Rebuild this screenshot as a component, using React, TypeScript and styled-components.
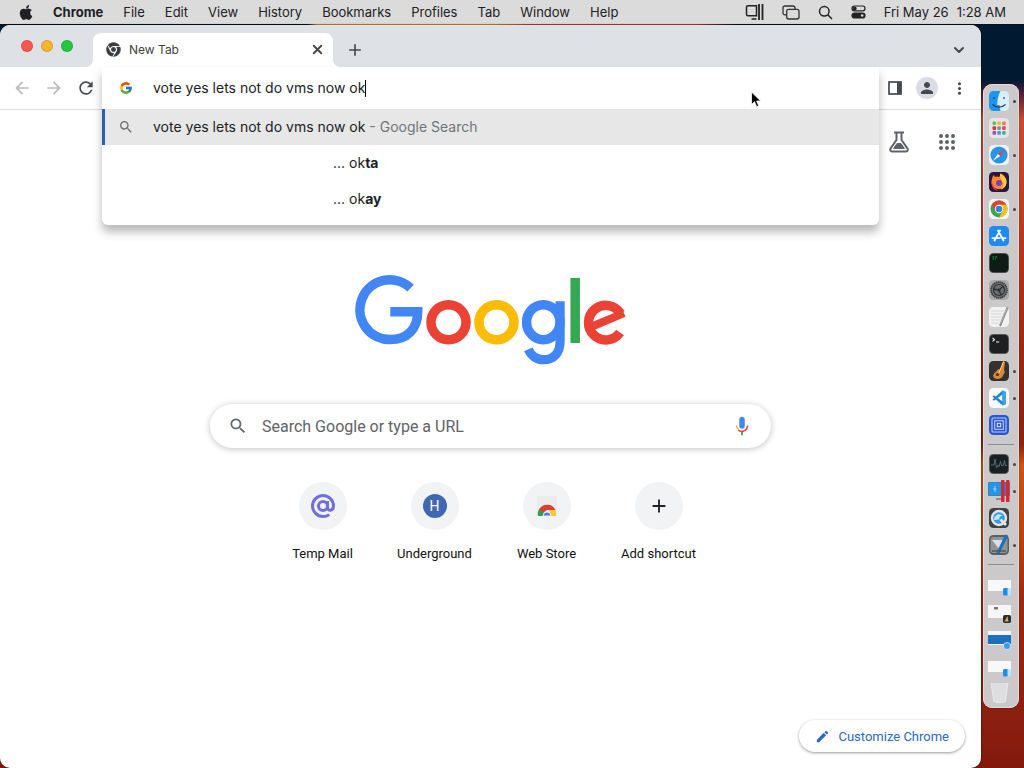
import React from "react";
import styled, { createGlobalStyle } from "styled-components";
import { FaApple, FaChrome } from "react-icons/fa";
import { FcGoogle } from "react-icons/fc";
import {
  MdAdd,
  MdArrowBack,
  MdArrowForward,
  MdEdit,
  MdMoreVert,
  MdPerson,
  MdRefresh,
  MdSearch,
} from "react-icons/md";
import { ChevronDown, X } from "lucide-react";

const GlobalStyle = createGlobalStyle`
  *, *::before, *::after { box-sizing: border-box; }
  body { margin: 0; font-family: Inter, "Liberation Sans", sans-serif; color: #202124; }
  button, input { font: inherit; color: inherit; }
  ul { list-style: none; margin: 0; padding: 0; }
`;

const Desktop = styled.div`
  min-height: 100vh;
  display: flex;
  flex-direction: column;
  overflow: hidden;
  background:
    linear-gradient(90deg, #05111f 30%, #d9982c 31%, #d9982c 48%, #c0413c 52%, #c0413c 68%, #05111f 72%) 0 0 / 100% 25px no-repeat,
    linear-gradient(180deg, #021a31 0, #021a31 80px, #4b1d35 92px, #c94a33 120px, #c4452c 170px, #b5341c 260px, #8e2412 400px, #8c2410 445px, #cf5217 465px, #b9430f 540px, #9c2a12 600px, #83190e 100%);
`;

const MenuBar = styled.header`
  height: 24px;
  display: flex;
  align-items: center;
  justify-content: space-between;
  padding: 0 18px 0 19px;
  background: #dcdbdb;
  font-size: 13px;
  line-height: 24px;
  white-space: nowrap;
`;

const MenuGroup = styled.nav<{ $gap: number }>`
  display: flex;
  align-items: center;
  gap: ${(p) => p.$gap}px;
`;

const MenuItem = styled.button<{ $strong?: boolean }>`
  border: 0;
  padding: 0;
  background: none;
  display: flex;
  align-items: center;
  font-weight: ${(p) => (p.$strong ? 700 : 400)};
`;

const AppleItem = styled(MenuItem)`
  width: 14px;
  justify-content: center;
`;

const Clock = styled.time`
  display: flex;
  gap: 8px;
`;

const Workspace = styled.div`
  flex: 1;
  display: flex;
  align-items: stretch;
  padding: 1px 5px 0 0;
  gap: 2px;
`;

const Window = styled.main`
  flex: 1;
  min-width: 0;
  display: flex;
  flex-direction: column;
  border-radius: 10px;
  background: #fff;
  overflow: hidden;
  box-shadow: 0 0 2px rgba(0, 0, 0, 0.8);
`;

const TabStrip = styled.div`
  height: 42px;
  display: flex;
  align-items: flex-end;
  padding: 0 12px 0 21px;
  background: #dee1e6;
`;

const Lights = styled.div`
  display: flex;
  gap: 8px;
  align-self: center;
  margin-right: 20px;
`;

const Light = styled.button<{ $color: string }>`
  width: 12px;
  height: 12px;
  padding: 0;
  border: 1px solid rgba(0, 0, 0, 0.12);
  border-radius: 50%;
  background: ${(p) => p.$color};
`;

const Tab = styled.div`
  position: relative;
  width: 240px;
  height: 34px;
  display: flex;
  align-items: center;
  gap: 8px;
  padding: 0 8px 1px 13px;
  border-radius: 8px 8px 0 0;
  background: #fff;
  color: #3c4043;
  font-size: 12px;
  &::before, &::after {
    content: "";
    position: absolute;
    bottom: 0;
    width: 8px;
    height: 8px;
  }
  &::before {
    left: -8px;
    background: radial-gradient(circle at 0 0, transparent 8px, #fff 8px);
  }
  &::after {
    right: -8px;
    background: radial-gradient(circle at 100% 0, transparent 8px, #fff 8px);
  }
`;

const TabTitle = styled.span`
  flex: 1;
`;

const IconButton = styled.button<{ $size: number; $color?: string }>`
  flex: none;
  width: ${(p) => p.$size}px;
  height: ${(p) => p.$size}px;
  display: flex;
  align-items: center;
  justify-content: center;
  padding: 0;
  border: 0;
  border-radius: 50%;
  background: none;
  color: ${(p) => p.$color ?? "#46494d"};
`;

const StripButtons = styled.div`
  flex: 1;
  height: 34px;
  display: flex;
  align-items: center;
  justify-content: space-between;
  padding-left: 10px;
`;

const Toolbar = styled.div`
  height: 43px;
  display: flex;
  align-items: center;
  padding: 0 6px;
  border-bottom: 1px solid #dadce0;
`;

const ToolbarGroup = styled.div`
  flex: none;
  display: flex;
  align-items: center;
`;

const OmniboxSlot = styled.div`
  position: relative;
  flex: 1;
  align-self: stretch;
`;

const Omnibox = styled.div`
  position: absolute;
  z-index: 2;
  inset: 0 0 auto 0;
  padding-bottom: 8px;
  border-radius: 0 0 6px 6px;
  background: #fff;
  box-shadow: 0 7px 10px rgba(0, 0, 0, 0.28);
  font-size: 14px;
  line-height: 20px;
`;

const OmniboxField = styled.label`
  height: 42px;
  display: flex;
  align-items: center;
  padding-left: 17px;
  gap: 20px;
`;

const Typed = styled.span`
  flex: 1;
  display: flex;
  align-items: center;
`;

const OmniInput = styled.input`
  field-sizing: content;
  padding: 0;
  border: 0;
  outline: 0;
  background: none;
  caret-color: transparent;
`;

const Caret = styled.span`
  width: 1px;
  height: 17px;
  background: #000;
`;

const Suggestion = styled.button<{ $selected?: boolean }>`
  width: 100%;
  height: 36px;
  display: flex;
  align-items: center;
  gap: 20px;
  padding: 0 0 0 14px;
  border: 0;
  border-left: 3px solid ${(p) => (p.$selected ? "#2a5ebf" : "transparent")};
  background: ${(p) => (p.$selected ? "#e7e7e7" : "#fff")};
  text-align: left;
  white-space: pre;
`;

const IconCell = styled.span`
  width: 14px;
  display: flex;
  justify-content: center;
  color: #6b6e72;
  svg { flex: none; }
`;

const TailText = styled.span`
  padding-left: 180px;
`;

const Muted = styled.span`
  color: #70757a;
`;

const Avatar = styled.span`
  width: 22px;
  height: 22px;
  display: flex;
  align-items: center;
  justify-content: center;
  border-radius: 50%;
  background: #dadce6;
`;

const Page = styled.section`
  flex: 1;
  display: flex;
  flex-direction: column;
  align-items: center;
  padding: 16px;
  font-family: Roboto, "Liberation Sans", sans-serif;
`;

const PageTools = styled.div`
  align-self: flex-end;
  display: flex;
  gap: 16px;
  padding-right: 2px;
`;

const Logo = styled.svg`
  display: block;
  margin: 117px 0 37px;
`;

const SearchBox = styled.label`
  width: 100%;
  max-width: 561px;
  height: 44px;
  display: flex;
  align-items: center;
  gap: 14px;
  padding: 0 14px 0 18px;
  border-radius: 22px;
  box-shadow: 0 1px 6px rgba(32, 33, 36, 0.28);
  color: #5f6368;
`;

const SearchInput = styled.input`
  flex: 1;
  min-width: 0;
  padding: 0;
  border: 0;
  outline: 0;
  background: none;
  font-size: 16px;
  &::placeholder { color: #5f6368; opacity: 1; }
`;

const Shortcuts = styled.ul`
  display: flex;
  margin-top: 34px;
`;

const Shortcut = styled.a`
  width: 112px;
  display: flex;
  flex-direction: column;
  align-items: center;
  gap: 16px;
  color: #111;
  font-size: 13px;
  line-height: 16px;
  text-decoration: none;
`;

const Disc = styled.span`
  width: 48px;
  height: 48px;
  display: flex;
  align-items: center;
  justify-content: center;
  border-radius: 50%;
  background: #f1f3f4;
`;

const Monogram = styled.span`
  width: 24px;
  height: 24px;
  border-radius: 50%;
  background: #4267b2;
  color: #fff;
  font-size: 14px;
  line-height: 24px;
  text-align: center;
`;

const Customize = styled.button`
  align-self: flex-end;
  margin-top: auto;
  height: 32px;
  display: flex;
  align-items: center;
  gap: 8px;
  padding: 0 16px;
  border: 0;
  border-radius: 16px;
  background: #fff;
  box-shadow: 0 1px 3px rgba(0, 0, 0, 0.4);
  color: #2b68c9;
  font-size: 13px;
`;

const Dock = styled.aside`
  flex: none;
  align-self: center;
  width: 36px;
  display: flex;
  flex-direction: column;
  margin-bottom: 2px;
  padding: 4px 0 0;
  border-radius: 9px;
  background: #cbc9c9;
  box-shadow: inset 0 0 0 1px #dfdad8, 0 0 1px #100808;
`;

const DockItem = styled.button<{ $running?: boolean }>`
  position: relative;
  height: 27px;
  display: flex;
  align-items: center;
  padding: 0 0 0 5px;
  border: 0;
  background: none;
  &::after {
    content: "";
    position: absolute;
    right: 3px;
    width: 3px;
    height: 3px;
    border-radius: 50%;
    background: ${(p) => (p.$running ? "#444" : "transparent")};
  }
`;

const DockRule = styled.hr<{ $after?: number }>`
  width: 26px;
  height: 1px;
  border: 0;
  margin: 5px 5px ${(p) => p.$after ?? 6}px;
  background: #8f8d8d;
`;

const Pointer = styled.svg`
  position: absolute;
  z-index: 3;
  right: 117px;
  top: 24px;
`;

const tile = (fill: string) => <rect x="1" y="1" width="20" height="20" rx="4.5" fill={fill} />;

const dockArt: Record<string, React.ReactNode> = {
  Finder: (
    <>
      {tile("#d9eefa")}
      <path d="M12.5 1H5.5A4.5 4.5 0 0 0 1 5.5v11A4.5 4.5 0 0 0 5.5 21h7c-.7-2-.8-4-.8-6H9.2c0-5 1-10 3.3-14z" fill="#1c94f0" />
      <path d="M6 7v2M16 7v2M4.5 14.5c4 3.4 9 3.4 13 0" stroke="#123a5c" strokeWidth="1.1" fill="none" />
    </>
  ),
  Launchpad: (
    <>
      {tile("#e6e5e5")}
      {["#5ac45b", "#f3b72e", "#ee7a4d", "#d8363d", "#8b8f95", "#e44951", "#a44fc0", "#35a0dd", "#37b5a2"].map((c, i) => (
        <rect key={c} x={4.5 + (i % 3) * 4.8} y={4.5 + Math.floor(i / 3) * 4.8} width="3.6" height="3.6" rx="1" fill={c} />
      ))}
    </>
  ),
  Safari: (
    <>
      {tile("#f2f2f2")}
      <circle cx="11" cy="11" r="8.6" fill="#2a94e8" />
      <path d="M17 5l-4.9 7.1-2.2-2.2z" fill="#e8443a" />
      <path d="M5 17l4.9-7.1 2.2 2.2z" fill="#f4f4f4" />
    </>
  ),
  Firefox: (
    <>
      {tile("#2b1544")}
      <path d="M4 8c.4-2 1-3.2 2-4 .2 1 .7 1.7 1.5 2C9 5 10 5.5 11 6c1-.6 1.4-2 1.2-3.5C16 4 19 7.5 18.5 12A7.6 7.6 0 0 1 3.5 12c-.1-1.5 0-2.7.5-4z" fill="#ff8a1f" />
      <path d="M12.2 2.5C16 4 19 7.5 18.5 12c-.5 3-2.5 5.5-5.5 6.5 2.5-3 3-6 1-9-1.5-2-2.2-4-1.8-7z" fill="#ffce3a" />
      <path d="M4 8c-.5 4 1 9.5 7 11.6C5 20 2.8 15 4 8z" fill="#f0365a" />
      <circle cx="11" cy="12" r="3" fill="#7a3bd0" />
    </>
  ),
  Chrome: (
    <>
      {tile("#f5f5f5")}
      <circle cx="11" cy="11" r="8.5" fill="#35a853" />
      <path d="M3.64 6.75A8.5 8.5 0 0 1 18.36 6.75H11z" fill="#e5402f" />
      <path d="M18.36 6.75A8.5 8.5 0 0 1 11 19.5L14.7 13z" fill="#fbc116" />
      <path d="M3.64 6.75L7.3 13.2 11 11V6.75z" fill="#e5402f" />
      <path d="M11 6.75h7.36L14.7 13 11 11z" fill="#fbc116" />
      <circle cx="11" cy="11" r="4.2" fill="#fff" />
      <circle cx="11" cy="11" r="3.3" fill="#3b7ded" />
    </>
  ),
  "App Store": (
    <>
      {tile("#1e8af2")}
      <path d="M12 5.5L6.5 15.5M10 5.5l5.5 10M4.5 13.2h7.3M14.8 13.2h2.7" stroke="#fff" strokeWidth="1.8" strokeLinecap="round" />
    </>
  ),
  iTerm: (
    <>
      {tile("#4b4e4e")}
      <rect x="2" y="2" width="18" height="18" rx="3.5" fill="#0e1c16" />
      <path d="M4.5 5h1.5M7 5h2M4.5 7h1.5M7 7h1" stroke="#23a448" strokeWidth="1" />
    </>
  ),
  "System Settings": (
    <>
      {tile("#a9a9aa")}
      <circle cx="11" cy="11" r="8" fill="#6e6f70" stroke="#3b3c3e" strokeWidth="1.6" strokeDasharray="1.5 .5" />
      <circle cx="11" cy="11" r="5.5" fill="none" stroke="#2e2f31" strokeWidth="1.2" />
      <path d="M11 11L5.5 10M11 11l4.3-4M11 11l2 5.2" stroke="#2e2f31" strokeWidth="1.4" />
      <circle cx="11" cy="11" r="1.6" fill="#2e2f31" />
    </>
  ),
  TextEdit: (
    <>
      {tile("#f2f2f2")}
      <path d="M3 5h13M3 8h13M3 11h12M3 14h10M3 17h8" stroke="#cfcfcf" strokeWidth=".8" />
      <path d="M19.5 1.5L12 20" stroke="#858585" strokeWidth="2" />
      <path d="M19 2L12.5 18" stroke="#c9c9c9" strokeWidth=".7" />
    </>
  ),
  Terminal: (
    <>
      {tile("#55585a")}
      <rect x="2" y="2" width="18" height="18" rx="3.5" fill="#1d1f20" />
      <path d="M4.5 5l2 1.7-2 1.7M8 9h3.2" stroke="#f1f1f1" strokeWidth="1.1" fill="none" />
    </>
  ),
  GarageBand: (
    <>
      {tile("#35312f")}
      <path d="M15 1.5l2 .4-1 8.3c2 2.5-.5 3.5-1 5.300-1 4-8 4.500-9.500 1.500-1-2.500 1.500-4 3-6 1-1.600 2.500-2.400 4-2z" fill="#d98a35" />
      <path d="M15.5 1.5L10.500 14" stroke="#f1d9a5" strokeWidth="1" />
      <circle cx="9.5" cy="14.5" r="1.6" fill="#5a2b10" />
    </>
  ),
  "Visual Studio Code": (
    <>
      {tile("#fafafa")}
      <path d="M14.5 3.5L18 5v12l-3.5 1.5-10-9 1.5-1.3 8.5 6.4V7.4L6 13.8l-1.5-1.3z" fill="#1f86cf" />
      <path d="M14.5 3.5L18 5v12l-3.5 1.5z" fill="#38a4ee" />
    </>
  ),
  ScreenFrame: (
    <>
      {tile("#2c56cf")}
      <rect x="4" y="4" width="14" height="14" rx="1" fill="none" stroke="#b5cbff" strokeWidth="1.1" />
      <rect x="6.7" y="6.7" width="8.6" height="8.6" fill="none" stroke="#b5cbff" strokeWidth="1.1" />
      <rect x="9.3" y="9.3" width="3.4" height="3.4" fill="none" stroke="#dbe6ff" strokeWidth="1" />
    </>
  ),
  "Activity Monitor": (
    <>
      {tile("#55595a")}
      <rect x="2" y="2" width="18" height="18" rx="3.5" fill="#172022" />
      <path d="M3 12h3l1-6 1.5 9 1.5-3 1 1.5 1.5-5 1 4h2l1-5 .8 5h1.7" stroke="#5a756f" strokeWidth=".9" fill="none" />
    </>
  ),
  Parallels: (
    <>
      <rect x="0" y="2" width="22" height="14" rx="1" fill="#3b7fc4" />
      <rect x="1" y="3" width="13" height="12" fill="#2496e6" />
      <path d="M5 9h3.5M7 6v6" stroke="#b5ddf8" strokeWidth=".8" />
      <path d="M8 19h5" stroke="#8c8c8c" strokeWidth="2" />
      <rect x="13" y="0" width="3.5" height="22" rx=".8" fill="#d5272f" />
      <rect x="18" y="0" width="3.5" height="22" rx=".8" fill="#d5272f" />
    </>
  ),
  QuickTime: (
    <>
      {tile("#3f4143")}
      <circle cx="11" cy="11" r="7" fill="#2f9be8" stroke="#e3e5e8" strokeWidth="2.4" />
      <path d="M6 13c0-5 5-8 9-4-3-.5-4 1-3.5 3.5z" fill="#bfe6fb" />
      <path d="M12.5 12.5l5.5 5.5" stroke="#e3e5e8" strokeWidth="2.6" />
    </>
  ),
  Xcode: (
    <>
      {tile("#5d5f60")}
      <rect x="2.5" y="3" width="17" height="16" rx="3" fill="#8f9497" />
      <path d="M4 6h11l-4 9z" fill="#d9dfe3" />
      <path d="M18.8 1L9.5 20" stroke="#1c6fbd" strokeWidth="3" />
      <path d="M4 17h14" stroke="#55585a" strokeWidth="1.5" />
    </>
  ),
  "Finder window": (
    <>
      <rect x="0" y="5" width="23" height="11" fill="#f8f8f8" />
      <rect x="15" y="13" width="8" height="7.5" rx="1.8" fill="#bfe2f9" />
      <path d="M19.5 13h-3q-1.5 0-1.5 1.5v4.5q0 1.5 1.5 1.5h3z" fill="#1c8de8" />
    </>
  ),
  "Project window": (
    <>
      <rect x="0" y="3" width="23" height="13" fill="#f6f6f6" />
      <rect x="6" y="5" width="4" height="2.5" fill="#77797c" />
      <rect x="15" y="13" width="8" height="8" rx="1.8" fill="#302b29" />
      <path d="M19.5 14l-3 5.5h4z" fill="#d3a868" />
    </>
  ),
  "Browser window": (
    <>
      <rect x="0" y="2" width="23" height="14" fill="#f6f6f6" />
      <rect x="0" y="6" width="23" height="9" fill="#1f6fbf" />
      <circle cx="19" cy="17" r="3.6" fill="#3f9bee" stroke="#d9ebfa" strokeWidth=".8" />
    </>
  ),
  Trash: (
    <path d="M3 0q8-2 17 0l-2.7 18.5q-6 2.5-11.5 0z" fill="#dedee0" stroke="#ededed" strokeWidth=".8" />
  ),
};

type DockApp = { name: string; art?: string; running?: boolean };

const apps: DockApp[] = [
  { name: "Finder", running: true },
  { name: "Launchpad" },
  { name: "Safari", running: true },
  { name: "Firefox" },
  { name: "Chrome", running: true },
  { name: "App Store" },
  { name: "iTerm" },
  { name: "System Settings" },
  { name: "TextEdit" },
  { name: "Terminal" },
  { name: "GarageBand", running: true },
  { name: "Visual Studio Code", running: true },
  { name: "ScreenFrame" },
];

const recents: DockApp[] = [
  { name: "Activity Monitor", running: true },
  { name: "Parallels", running: true },
  { name: "QuickTime" },
  { name: "Xcode", running: true },
];

const minimized: DockApp[] = [
  { name: "Downloads", art: "Finder window" },
  { name: "Project", art: "Project window" },
  { name: "Web page", art: "Browser window" },
  { name: "Documents", art: "Finder window" },
  { name: "Trash" },
];

const DockGroup = ({ items }: { items: DockApp[] }) => (
  <>
    {items.map((it) => (
      <DockItem key={it.name} $running={it.running} aria-label={it.name}>
        <svg width="23" height="22" viewBox="0 0 23 22">
          {dockArt[it.art ?? it.name]}
        </svg>
      </DockItem>
    ))}
  </>
);

const GoogleLogo = () => (
  <Logo width="272" height="92" viewBox="0 0 272 92" fill="none" strokeWidth="9.5" role="img" aria-label="Google">
    <path stroke="#4285f4" d="M55.6 13.2A29.9 29.9 0 1 0 35.3 64.6C51.5 64.6 62.7 54.5 62.7 36.7H35.3" />
    <ellipse stroke="#ea4335" cx="93.5" cy="47.2" rx="17.5" ry="17.5" />
    <ellipse stroke="#fbbc05" cx="141.5" cy="47.2" rx="17.5" ry="17.5" />
    <ellipse stroke="#4285f4" cx="188.3" cy="47.2" rx="16.7" ry="17.5" />
    <path stroke="#4285f4" strokeWidth="9.2" d="M205.1 26.3V66C205.1 78 198.5 84.7 188.7 84.7C181 84.7 175.7 80 173.2 74.4" />
    <path stroke="#34a853" d="M220.2 3V68" />
    <path stroke="#ea4335" d="M265 57.6A17.3 17.3 0 1 1 265.6 38.6" />
    <path fill="#ea4335" d="M236 47.6L261.500 37L267 33.5L270.500 41.8L238 55.5Z" />
  </Logo>
);

const shortcuts: { label: string; icon: React.ReactNode }[] = [
  {
    label: "Temp Mail",
    icon: (
      <svg width="26" height="26" viewBox="0 0 26 26" fill="none" stroke="#6f6fe0" strokeWidth="3">
        <circle cx="13" cy="13" r="4.5" />
        <path d="M17.5 8v6.5c0 4 6 3.6 6-1.5A10.5 10.5 0 1 0 13 23.5c2.5 0 4.5-.6 6.3-1.9" />
      </svg>
    ),
  },
  { label: "Underground", icon: <Monogram>H</Monogram> },
  {
    label: "Web Store",
    icon: (
      <svg width="24" height="24" viewBox="0 0 24 24">
        <rect x="2" y="2" width="20" height="20" rx="1" fill="#ececed" />
        <path d="M3 22a9 9 0 0 1 2.2-8L9 19v3z" fill="#2f9e55" />
        <path d="M21 22a9 9 0 0 0-1-7h-6l1 7z" fill="#fcc934" />
        <path d="M4 16a9 9 0 0 1 16.4 0H12l-3.5 2.5z" fill="#d9412f" />
        <path d="M8 22a4 4 0 0 1 8 0z" fill="#4a80ec" stroke="#fff" strokeWidth=".8" />
        <rect x="1" y="22" width="22" height="2" fill="#f1f3f4" />
      </svg>
    ),
  },
  { label: "Add shortcut", icon: <MdAdd size={22} color="#202124" /> },
];

const menus = ["File", "Edit", "View", "History", "Bookmarks", "Profiles", "Tab", "Window", "Help"];

export default function App() {
  return (
    <>
      <GlobalStyle />
      <Desktop>
        <MenuBar>
          <MenuGroup $gap={20}>
            <AppleItem aria-label="Apple menu">
              <FaApple size={17} />
            </AppleItem>
            <MenuItem $strong>Chrome</MenuItem>
            {menus.map((m) => (
              <MenuItem key={m}>{m}</MenuItem>
            ))}
          </MenuGroup>
          <MenuGroup $gap={18}>
            <MenuItem aria-label="Parallels">
              <svg width="19" height="16" viewBox="0 0 19 16" fill="none" stroke="#222" strokeWidth="1.5">
                <path d="M11.5 1.8H3q-1.5 0-1.5 1.5v7q0 1.5 1.5 1.5h8.5zM6.5 15h5" />
                <path d="M14 0v16M17.5 0v16" strokeWidth="1.8" />
              </svg>
            </MenuItem>
            <MenuItem aria-label="Windows">
              <svg width="18" height="15" viewBox="0 0 18 15" fill="none" stroke="#333" strokeWidth="1.3">
                <path d="M4.5 9.8H3q-2 0-2-2V3q0-2 2-2h8q2 0 2 2v1" />
                <rect x="4.7" y="4.3" width="12.3" height="9.7" rx="2" />
              </svg>
            </MenuItem>
            <MenuItem aria-label="Spotlight">
              <svg width="15" height="15" viewBox="0 0 15 15" fill="none" stroke="#222" strokeWidth="1.5">
                <circle cx="6.3" cy="6.3" r="4.8" />
                <path d="M9.8 9.8L14 14" />
              </svg>
            </MenuItem>
            <MenuItem aria-label="Control Center">
              <svg width="15" height="14" viewBox="0 0 15 14" fill="none" stroke="#222" strokeWidth="1.2">
                <rect x="1" y="1" width="13" height="4.8" rx="2.4" />
                <circle cx="3.7" cy="3.4" r="1.4" fill="#222" />
                <rect x="1" y="8" width="13" height="5" rx="2.5" fill="#222" />
                <circle cx="11.2" cy="10.5" r="1.3" fill="#dcdbdb" stroke="none" />
              </svg>
            </MenuItem>
            <Clock>
              <span>Fri May 26</span>
              <span>1:28 AM</span>
            </Clock>
          </MenuGroup>
        </MenuBar>

        <Workspace>
          <Window>
            <TabStrip>
              <Lights>
                <Light $color="#fc5652" aria-label="Close window" />
                <Light $color="#f9b42a" aria-label="Minimize window" />
                <Light $color="#26c640" aria-label="Zoom window" />
              </Lights>
              <Tab>
                <FaChrome size={15} />
                <TabTitle>New Tab</TabTitle>
                <IconButton $size={16} aria-label="Close tab">
                  <X size={15} strokeWidth={3} />
                </IconButton>
              </Tab>
              <StripButtons>
                <IconButton $size={24} aria-label="New tab">
                  <MdAdd size={20} />
                </IconButton>
                <IconButton $size={20} aria-label="Search tabs">
                  <ChevronDown size={16} strokeWidth={3} />
                </IconButton>
              </StripButtons>
            </TabStrip>

            <Toolbar>
              <ToolbarGroup>
                <IconButton $size={32} $color="#b9bbbe" aria-label="Back">
                  <MdArrowBack size={20} />
                </IconButton>
                <IconButton $size={32} $color="#b9bbbe" aria-label="Forward">
                  <MdArrowForward size={20} />
                </IconButton>
                <IconButton $size={32} aria-label="Reload">
                  <MdRefresh size={20} />
                </IconButton>
              </ToolbarGroup>
              <OmniboxSlot>
                <Omnibox>
                  <OmniboxField>
                    <FcGoogle size={14} />
                    <Typed>
                      <OmniInput defaultValue="vote yes lets not do vms now ok" aria-label="Address and search bar" />
                      <Caret />
                    </Typed>
                  </OmniboxField>
                  <ul>
                    <li>
                      <Suggestion $selected>
                        <IconCell>
                          <MdSearch size={16} />
                        </IconCell>
                        <span>
                          vote yes lets not do vms now ok <Muted>- Google Search</Muted>
                        </span>
                      </Suggestion>
                    </li>
                    {["ta", "ay"].map((end) => (
                      <li key={end}>
                        <Suggestion>
                          <IconCell />
                          <TailText>
                            ... ok<b>{end}</b>
                          </TailText>
                        </Suggestion>
                      </li>
                    ))}
                  </ul>
                </Omnibox>
                <Pointer width="12" height="18" viewBox="0 0 12 18">
                  <path d="M1.5 1v12.5l3-2.8 2.2 5 2-.9-2.1-4.8h4.1z" fill="#000" stroke="#fff" strokeWidth=".8" />
                </Pointer>
              </OmniboxSlot>
              <ToolbarGroup>
                <IconButton $size={32} aria-label="Side panel">
                  <svg width="14" height="14" viewBox="0 0 14 14">
                    <rect x="1" y="1" width="12" height="12" fill="none" stroke="currentColor" strokeWidth="1.7" />
                    <rect x="9" y="1" width="4.5" height="12" fill="currentColor" />
                  </svg>
                </IconButton>
                <IconButton $size={32} aria-label="Profile">
                  <Avatar>
                    <MdPerson size={18} />
                  </Avatar>
                </IconButton>
                <IconButton $size={32} aria-label="Menu">
                  <MdMoreVert size={19} />
                </IconButton>
              </ToolbarGroup>
            </Toolbar>

            <Page>
              <PageTools>
                <IconButton $size={32} $color="#5f6368" aria-label="Labs">
                  <svg width="20" height="22" viewBox="0 0 20 22" fill="none" stroke="currentColor" strokeWidth="2">
                    <path d="M5 1.5h10M7.5 2v7L1.5 17.5Q.5 20.5 3.5 20.5h13q3 0 2-3L12.5 9V2" />
                    <path d="M4.5 17.5L8 12.5h4l3.5 5z" fill="currentColor" strokeWidth="1" />
                  </svg>
                </IconButton>
                <IconButton $size={32} $color="#5f6368" aria-label="Google apps">
                  <svg width="18" height="18" viewBox="0 0 18 18" fill="currentColor">
                    {[3, 9, 15].map((y) => [3, 9, 15].map((x) => <circle key={`${x}-${y}`} cx={x} cy={y} r="2" />))}
                  </svg>
                </IconButton>
              </PageTools>
              <GoogleLogo />
              <SearchBox>
                <MdSearch size={20} />
                <SearchInput placeholder="Search Google or type a URL" aria-label="Search Google" />
                <IconButton $size={30} aria-label="Search by voice">
                  <svg width="22" height="22" viewBox="0 0 24 24">
                    <path d="M12 15c1.7 0 3-1.3 3-3V5c0-1.7-1.3-3-3-3S9 3.3 9 5v7c0 1.7 1.3 3 3 3z" fill="#4285f4" />
                    <path d="M11 18.1h2V22h-2z" fill="#34a853" />
                    <path d="M7.1 15.5A7 7 0 0 1 5.2 11.5h1.7c0 1.5.6 2.7 1.6 3.6z" fill="#f9ab00" />
                    <path d="M12 17c-1.5 0-2.8-.6-3.7-1.5l-1.2 1.2A7 7 0 0 0 12 18.7c3.9 0 6.9-3.2 6.9-7.2h-1.7c0 3-2.3 5.5-5.2 5.5z" fill="#ea4335" />
                  </svg>
                </IconButton>
              </SearchBox>
              <Shortcuts>
                {shortcuts.map((s) => (
                  <li key={s.label}>
                    <Shortcut href="#">
                      <Disc>{s.icon}</Disc>
                      {s.label}
                    </Shortcut>
                  </li>
                ))}
              </Shortcuts>
              <Customize>
                <MdEdit size={15} />
                Customize Chrome
              </Customize>
            </Page>
          </Window>

          <Dock>
            <DockGroup items={apps} />
            <DockRule />
            <DockGroup items={recents} />
            <DockRule $after={8} />
            <DockGroup items={minimized} />
          </Dock>
        </Workspace>
      </Desktop>
    </>
  );
}
